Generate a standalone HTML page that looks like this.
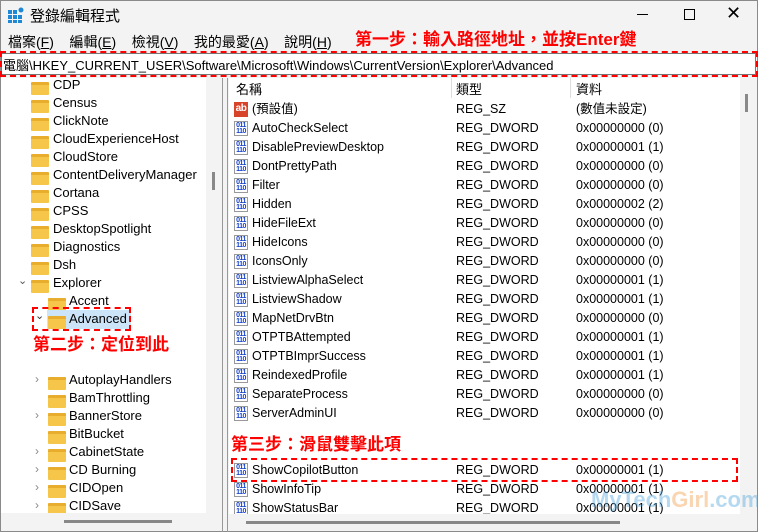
<!DOCTYPE html>
<html><head><meta charset="utf-8"><style>
*{margin:0;padding:0;box-sizing:border-box}
body{width:758px;height:532px;overflow:hidden;background:#f3f3f3;font-family:"Liberation Sans","Noto Sans CJK TC",sans-serif;font-size:12.5px;color:#000;position:relative}
.a{position:absolute;white-space:nowrap}
.red{color:#f00;font-weight:bold;font-size:17px}
.dash{position:absolute;border:2px dashed #f00}
.fold{position:absolute;width:18px;height:13px;background:#f5c64a;border-top:3px solid #e9ad2d;border-radius:1px}
.row{position:absolute;left:0;height:19px;line-height:19px}
.ic{position:absolute;left:5px;top:2px;width:14px;height:15px;border:1px solid #999;background:#fff;font-size:7px;line-height:6px;color:#1240c8;font-weight:bold;text-align:center;letter-spacing:-0.5px;padding-top:1px}
.ab{color:#fff;background:#d8442a;font-size:10px;line-height:11px;border:none}
</style></head><body>
<div style="position:absolute;left:0;top:0;width:758px;height:532px;border:1px solid #8a8a8a"></div>
<svg class="a" style="left:8px;top:7px" width="16" height="16"><rect x="0" y="3" width="4" height="4" fill="#1e88d4"/><rect x="5" y="3" width="4" height="4" fill="#1e88d4"/><rect x="0" y="8" width="4" height="4" fill="#1e88d4"/><rect x="5" y="8" width="4" height="4" fill="#1e88d4"/><rect x="10" y="8" width="4" height="4" fill="#1e88d4"/><rect x="0" y="13" width="4" height="3" fill="#1e88d4"/><rect x="5" y="13" width="4" height="3" fill="#1e88d4"/><rect x="10" y="13" width="4" height="3" fill="#1e88d4"/><circle cx="13" cy="3" r="2.5" fill="#1e88d4"/></svg>
<div class="a" style="left:30px;top:5px;font-size:15px">登錄編輯程式</div>
<div class="a" style="left:637px;top:14px;width:11px;border-top:1px solid #000"></div>
<div class="a" style="left:684px;top:9px;width:11px;height:11px;border:1px solid #000"></div>
<div class="a" style="left:726px;top:3px;font-size:18px;font-weight:300">✕</div>
<div class="a" style="left:8px;top:32px;font-size:14px;word-spacing:0">檔案(<u>F</u>)&nbsp;&nbsp;&nbsp; 編輯(<u>E</u>)&nbsp;&nbsp;&nbsp; 檢視(<u>V</u>)&nbsp;&nbsp;&nbsp; 我的最愛(<u>A</u>)&nbsp;&nbsp;&nbsp; 說明(<u>H</u>)</div>
<div class="a red" style="left:355px;top:25px">第一步：輸入路徑地址，並按Enter鍵</div>
<div class="a" style="left:1px;top:53px;width:755px;height:22px;background:#fff;border:1px solid #777"></div>
<div class="a" style="left:3px;top:55px;font-size:13px">電腦\HKEY_CURRENT_USER\Software\Microsoft\Windows\CurrentVersion\Explorer\Advanced</div>
<div class="dash" style="left:0;top:51px;width:758px;height:26px"></div>
<div class="a" style="left:1px;top:78px;width:205px;height:435px;background:#fff;overflow:hidden" id="L"></div>
<div class="a" style="left:212px;top:172px;width:3px;height:18px;background:#888"></div>
<div class="a" style="left:64px;top:520px;width:108px;height:3px;background:#888"></div>
<div class="a" style="left:222px;top:78px;width:1px;height:454px;background:#999"></div>
<div class="a" style="left:227px;top:78px;width:1px;height:454px;background:#999"></div>
<div class="a" style="left:229px;top:78px;width:511px;height:436px;background:#fff;overflow:hidden" id="R"></div>
<div class="a" style="left:745px;top:94px;width:3px;height:18px;background:#888"></div>
<div class="a" style="left:246px;top:521px;width:374px;height:3px;background:#888"></div>
<div class="a" style="left:591px;top:487px;font-size:22px;font-weight:bold;color:rgba(70,160,220,0.4)">MyTech<span style="color:rgba(240,150,60,0.4)">Girl</span>.com</div>
<script>
var L=document.getElementById('L'),h='';
var tree=['CDP','Census','ClickNote','CloudExperienceHost','CloudStore','ContentDeliveryManager','Cortana','CPSS','DesktopSpotlight','Diagnostics','Dsh'];
var y=-1;
tree.forEach(function(t){h+='<div class="a" style="left:30px;top:'+(y+5)+'px" ><div class="fold" style="position:relative"></div></div><div class="a" style="left:52px;top:'+y+'px;font-size:13px">'+t+'</div>';y+=18;});
h+='<div class="a" style="left:17px;top:'+(y-1)+'px;font-size:11px;color:#555">⌄</div><div class="a" style="left:30px;top:'+(y+5)+'px"><div class="fold" style="position:relative"></div></div><div class="a" style="left:52px;top:'+y+'px;font-size:13px">Explorer</div>';y+=18;
h+='<div class="a" style="left:47px;top:'+(y+5)+'px"><div class="fold" style="position:relative"></div></div><div class="a" style="left:68px;top:'+y+'px;font-size:13px">Accent</div>';y+=18;
h+='<div class="a" style="left:46px;top:'+(y-1)+'px;width:84px;height:19px;background:#cce4f7"></div><div class="a" style="left:34px;top:'+(y-2)+'px;font-size:11px;color:#333">⌄</div><div class="a" style="left:47px;top:'+(y+5)+'px"><div class="fold" style="position:relative"></div></div><div class="a" style="left:68px;top:'+y+'px;font-size:13px">Advanced</div>';
y=294;
['AutoplayHandlers','BamThrottling','BannerStore','BitBucket','CabinetState','CD Burning','CIDOpen','CIDSave','CLSID'].forEach(function(n,i){var ar=[0,2,4,5,6,7,8].indexOf(i)>=0;h+=(ar?'<div class="a" style="left:34px;top:'+y+'px;font-size:12px;color:#888">›</div>':'')+'<div class="a" style="left:47px;top:'+(y+5)+'px"><div class="fold" style="position:relative"></div></div><div class="a" style="left:68px;top:'+y+'px;font-size:13px">'+n+'</div>';y+=18;});
L.innerHTML=h;
var R=document.getElementById('R');h='';
h+='<div class="a" style="left:7px;top:1px;font-size:13px">名稱</div><div class="a" style="left:227px;top:1px;font-size:13px">類型</div><div class="a" style="left:347px;top:1px;font-size:13px">資料</div><div class="a" style="left:222px;top:0;width:1px;height:20px;background:#ddd"></div><div class="a" style="left:341px;top:0;width:1px;height:20px;background:#ddd"></div>';
var rows=[['(預設值)','REG_SZ','(數值未設定)',1],['AutoCheckSelect','REG_DWORD','0x00000000 (0)'],['DisablePreviewDesktop','REG_DWORD','0x00000001 (1)'],['DontPrettyPath','REG_DWORD','0x00000000 (0)'],['Filter','REG_DWORD','0x00000000 (0)'],['Hidden','REG_DWORD','0x00000002 (2)'],['HideFileExt','REG_DWORD','0x00000000 (0)'],['HideIcons','REG_DWORD','0x00000000 (0)'],['IconsOnly','REG_DWORD','0x00000000 (0)'],['ListviewAlphaSelect','REG_DWORD','0x00000001 (1)'],['ListviewShadow','REG_DWORD','0x00000001 (1)'],['MapNetDrvBtn','REG_DWORD','0x00000000 (0)'],['OTPTBAttempted','REG_DWORD','0x00000001 (1)'],['OTPTBImprSuccess','REG_DWORD','0x00000001 (1)'],['ReindexedProfile','REG_DWORD','0x00000001 (1)'],['SeparateProcess','REG_DWORD','0x00000000 (0)'],['ServerAdminUI','REG_DWORD','0x00000000 (0)'],null,null,['ShowCopilotButton','REG_DWORD','0x00000001 (1)'],['ShowInfoTip','REG_DWORD','0x00000001 (1)'],['ShowStatusBar','REG_DWORD','0x00000001 (1)']];
rows.forEach(function(r,i){if(!r)return;var t=22+i*19;h+='<div class="row" style="top:'+t+'px;width:511px">'+(r[3]?'<div class="ic ab">ab</div>':'<div class="ic">011<br>110</div>')+'<span class="a" style="left:23px;font-size:12.5px">'+r[0]+'</span><span class="a" style="left:227px">'+r[1]+'</span><span class="a" style="left:347px">'+r[2]+'</span></div>';});
R.innerHTML=h;
</script>
<div class="a red" style="left:33px;top:330px">第二步：定位到此</div>
<div class="dash" style="left:32px;top:307px;width:99px;height:24px"></div>
<div class="a red" style="left:231px;top:430px">第三步：滑鼠雙擊此項</div>
<div class="dash" style="left:231px;top:458px;width:507px;height:24px"></div>
</body></html>
